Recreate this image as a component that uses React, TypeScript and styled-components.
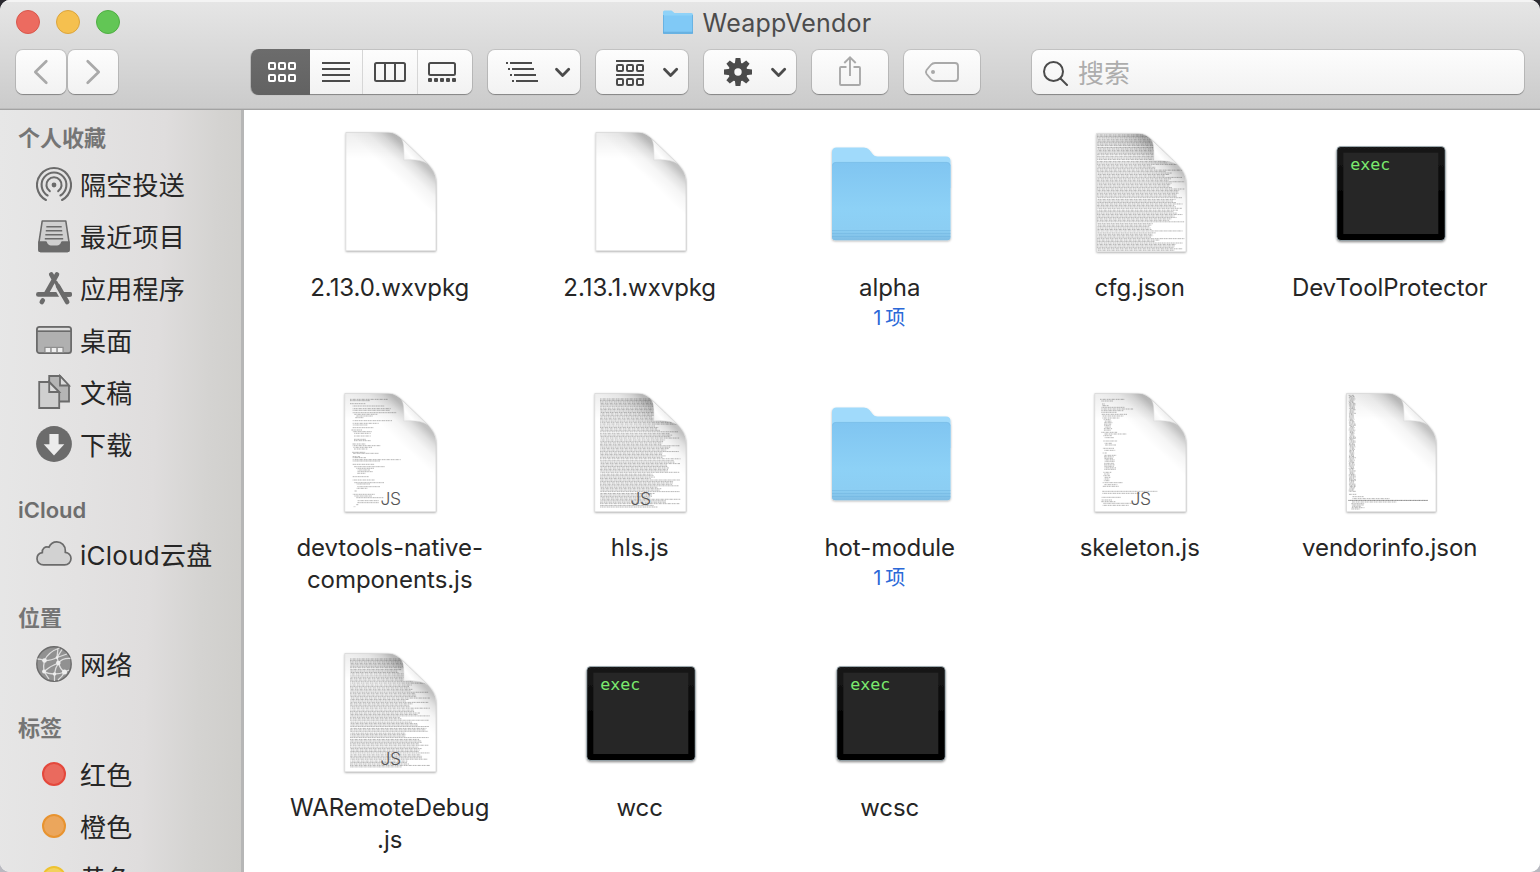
import React from "react";
import styled, { createGlobalStyle } from "styled-components";

const GlobalStyle = createGlobalStyle`
  * { box-sizing: border-box; }
  html, body { margin: 0; padding: 0; }
  body {
    width: 1540px;
    height: 872px;
    overflow: hidden;
    background: linear-gradient(#2b2a30 0, #2b2a30 50%, #b9b9c0 50%, #b9b9c0 100%);
    font-family: Inter, "Noto Sans CJK SC", sans-serif;
  }
`;

/* ---------- window frame ---------- */

const Window = styled.div`
  display: flex;
  flex-direction: column;
  width: 1540px;
  height: 872px;
  border-radius: 10px;
  overflow: hidden;
  background: #fff;
`;

const Header = styled.header`
  flex: none;
  display: flex;
  flex-direction: column;
  height: 110px;
  background: linear-gradient(#e6e6e6, #cbcbcb);
  border-bottom: 1px solid #a3a3a3;
  box-shadow: inset 0 2px 0 #f4f4f4, inset 0 -1px 0 #bdbdbd;
`;

const TitleBar = styled.div`
  display: grid;
  grid-template-columns: 1fr auto 1fr;
  align-items: center;
  height: 50px;
  padding: 0 22px 6px 16px;
`;

const Lights = styled.div`
  display: flex;
  gap: 16px;
`;

const Light = styled.span<{ $fill: string; $edge: string }>`
  width: 24px;
  height: 24px;
  border-radius: 50%;
  background: ${(p) => p.$fill};
  border: 1px solid ${(p) => p.$edge};
`;

const Title = styled.div`
  display: flex;
  align-items: center;
  gap: 10px;
  color: #4c4c4c;
  font-size: 25px;
  line-height: 30px;
  letter-spacing: 0.2px;
`;

const TitleText = styled.span`
  padding-top: 2px;
`;

const Toolbar = styled.div`
  display: flex;
  align-items: flex-start;
  padding: 0 16px;
`;

const ToolButton = styled.button<{ $width: number; $ml?: number }>`
  display: flex;
  flex: none;
  width: ${(p) => p.$width}px;
  height: 44px;
  margin: 0 0 0 ${(p) => p.$ml ?? 0}px;
  padding: 0;
  border: 0;
  border-radius: 7px;
  background: linear-gradient(#fdfdfd, #f2f2f2);
  box-shadow: 0 0 0 1px rgba(0, 0, 0, 0.11), 0 1px 1px rgba(0, 0, 0, 0.28);
`;

const Segments = styled.div`
  display: flex;
  flex: none;
  width: 221px;
  height: 44px;
  margin-left: 133px;
  border-radius: 7px;
  box-shadow: 0 0 0 1px rgba(0, 0, 0, 0.11), 0 1px 1px rgba(0, 0, 0, 0.28);
`;

const Segment = styled.button<{ $width: number; $divided?: boolean; $last?: boolean }>`
  display: flex;
  flex: none;
  width: ${(p) => p.$width}px;
  height: 44px;
  padding: 0;
  border: 0;
  border-radius: ${(p) => (p.$last ? "0 7px 7px 0" : "0")};
  background: linear-gradient(#fdfdfd, #f2f2f2);
  box-shadow: ${(p) => (p.$divided ? "inset 1px 0 0 #d6d6d6" : "none")};
`;

const ActiveSegment = styled(Segment)`
  height: 46px;
  margin-top: -1px;
  padding-top: 1px;
  border-radius: 8px 0 0 8px;
  background: linear-gradient(#6c6c6c, #626262);
`;

const SearchField = styled.div`
  display: flex;
  flex: 1;
  align-items: center;
  gap: 9px;
  height: 44px;
  margin-left: 52px;
  padding-left: 11px;
  border-radius: 7px;
  background: linear-gradient(#fdfdfd, #f2f2f2);
  box-shadow: 0 0 0 1px rgba(0, 0, 0, 0.11), 0 1px 1px rgba(0, 0, 0, 0.28);
  color: #adadad;
  font-size: 26px;
  line-height: 40px;
`;

const SearchText = styled.span`
  padding-top: 3px;
`;

const Main = styled.div`
  display: flex;
  flex: 1;
  min-height: 0;
`;

/* ---------- sidebar ---------- */

const Sidebar = styled.nav`
  flex: none;
  display: flex;
  flex-direction: column;
  gap: 18px;
  width: 244px;
  padding-top: 8px;
  overflow: hidden;
  background: linear-gradient(92deg, #e7e7e7 0%, #e3e2e2 35%, #dfdddd 62%, #d4d3d1 82%, #cecdca 100%);
  border-right: 3px solid #b6b6b6;
`;

const Section = styled.section`
  flex: none;
`;

const SectionTitle = styled.div<{ $latin?: boolean }>`
  height: 40px;
  padding: ${(p) => (p.$latin ? "2px" : "0")} 0 0 18px;
  color: ${(p) => (p.$latin ? "#6e6e6e" : "#757575")};
  font-size: 22px;
  font-weight: 600;
  line-height: 40px;
`;

const SideItem = styled.div`
  display: flex;
  align-items: center;
  gap: 8px;
  height: 52px;
  padding-left: 36px;
  color: #262626;
  font-size: 26px;
  line-height: 48px;
  white-space: nowrap;
`;

const SideLabel = styled.span`
  padding-top: 3px;
  letter-spacing: 0.25px;
`;

const SideIcon = styled.span`
  display: flex;
  flex: none;
  align-items: center;
  justify-content: center;
  width: 36px;
  height: 36px;
`;

const TagDot = styled.span<{ $fill: string; $edge: string }>`
  width: 24px;
  height: 24px;
  border-radius: 50%;
  background: ${(p) => p.$fill};
  border: 2px solid ${(p) => p.$edge};
`;

/* ---------- files ---------- */

const Files = styled.main`
  flex: 1;
  display: grid;
  grid-template-columns: repeat(5, 250px);
  grid-auto-rows: 260px;
  align-content: start;
  padding: 18px 0 0 21px;
  overflow: hidden;
  background: #fff;
`;

const File = styled.figure`
  display: flex;
  flex-direction: column;
  align-items: center;
  margin: 0;
`;

const FileName = styled.figcaption`
  display: flex;
  flex-direction: column;
  align-items: center;
  padding: 16px 0.6px 0 0;
  color: #262626;
  font-size: 24px;
  line-height: 32px;
  letter-spacing: -0.05px;
  white-space: nowrap;
`;

const FileInfo = styled.span`
  display: flex;
  gap: 4px;
  padding-right: 1px;
  color: #2b68d8;
  font-size: 20px;
  line-height: 28px;
`;

/* ---------- toolbar icons ---------- */

const DARK = "#4b4b4b";
const PALE = "#a9a9a9";

const Chevron = () => (
  <path d="M68.5 19.2 74.6 25.4 80.7 19.2" fill="none" stroke={DARK} strokeWidth="2.8" strokeLinecap="round" strokeLinejoin="round" />
);

const BackIcon = () => (
  <svg width="50" height="44" fill="none" stroke={PALE} strokeWidth="2.7" strokeLinecap="round" strokeLinejoin="round">
    <path d="M30.300 11.200 19.300 22 30.300 32.800" />
  </svg>
);

const ForwardIcon = () => (
  <svg width="50" height="44" fill="none" stroke={PALE} strokeWidth="2.7" strokeLinecap="round" strokeLinejoin="round">
    <path d="M19.700 11.200 30.700 22 19.700 32.800" />
  </svg>
);

const GridIcon = () => (
  <svg width="59" height="44" fill="none" stroke="#fff" strokeWidth="2">
    {[13, 25].map((y) => [18, 28, 38].map((x) => <rect key={`${x}-${y}`} x={x} y={y} width="6" height="6" rx="1" />))}
  </svg>
);

const ListIcon = () => (
  <svg width="52" height="44" stroke={DARK} strokeWidth="2">
    <path d="M12 13H40M12 19H40M12 25H40M12 31H40" />
  </svg>
);

const ColumnsIcon = () => (
  <svg width="55" height="44" fill="none" stroke={DARK} strokeWidth="2">
    <rect x="13" y="13" width="30" height="18" rx="1.5" />
    <path d="M23 13V31M33 13V31" />
  </svg>
);

const GalleryIcon = () => (
  <svg width="55" height="44" fill="none" stroke={DARK} strokeWidth="2">
    <rect x="12" y="13" width="26" height="12" rx="1.5" />
    {[11, 17, 23, 29, 35].map((x) => (
      <rect key={x} x={x} y="28" width="4" height="4" rx="1" fill={DARK} stroke="none" />
    ))}
  </svg>
);

const OutlineIcon = () => (
  <svg width="92" height="44" stroke={DARK} strokeWidth="2">
    <path d="M18 13h2m2 0h22M20 19h2m2 0h22M22 25h2m2 0h22M24 31h2m2 0h22" fill="none" />
    <Chevron />
  </svg>
);

const GroupIcon = () => (
  <svg width="92" height="44" fill="none" stroke={DARK} strokeWidth="2">
    <path d="M20 11H48M20 25H48" />
    {[15, 29].map((y) => [21, 31, 41].map((x) => <rect key={`${x}-${y}`} x={x} y={y} width="6" height="6" rx="1" />))}
    <Chevron />
  </svg>
);

const GearIcon = () => (
  <svg width="92" height="44">
    <g transform="translate(34 22)" fill={DARK}>
      {[0, 45, 90, 135].map((a) => (
        <path key={a} transform={`rotate(${a})`} d="M-2.4-14H2.4L3.2-8V8L2.4 14H-2.4L-3.2 8V-8Z" />
      ))}
      <circle r="9.6" />
      <circle r="3.7" fill="#f8f8f8" />
    </g>
    <Chevron />
  </svg>
);

const ShareIcon = () => (
  <svg width="76" height="44" fill="none" stroke={PALE} strokeWidth="1.9">
    <path d="M34.5 17H29Q28 17 28 18V34Q28 35 29 35H47Q48 35 48 34V18Q48 17 47 17H41.5" />
    <path d="M38 26V7.5M32.3 13 38 7.3 43.7 13" />
  </svg>
);

const TagIcon = () => (
  <svg width="76" height="44" fill="none" stroke={PALE} strokeWidth="1.9">
    <path d="M31 13H51Q54 13 54 16V28Q54 31 51 31H31Q28.5 31 26.8 29L22.6 24Q21.2 22 22.6 20L26.8 15Q28.5 13 31 13Z" />
    <circle cx="29" cy="22" r="2" fill={PALE} stroke="none" />
  </svg>
);

const SearchIcon = () => (
  <svg width="26" height="28" fill="none" stroke={DARK} strokeWidth="2" strokeLinecap="round">
    <circle cx="10.500" cy="13.500" r="9.500" />
    <path d="M17.500 20.500 24 27" />
  </svg>
);

const TitleFolder = () => (
  <svg width="30" height="25">
    <path d="M0 2Q0 .5 1.5 .5H8.5L11.5 3H28.5Q30 3 30 4.5V22H0Z" fill="#8fd2f8" />
    <rect x="0" y="5.5" width="30" height="18.5" rx="1" fill="#80c9f6" />
    <path d="M0 22.3H30" stroke="#62acdc" strokeWidth="1" />
    <path d="M.5 5V23.5H29.5V5" fill="none" stroke="#5faadb" strokeOpacity=".7" />
  </svg>
);

/* ---------- sidebar icons ---------- */

const G = "#6b6b6b";

const AirDropIcon = () => (
  <svg width="36" height="36" fill="none" stroke={G} strokeWidth="2.1" strokeLinecap="round">
    <path d="M9.9 34A17 17 0 1 1 26.1 34" />
    <path d="M11.6 29.5A12.4 12.4 0 1 1 24.4 29.5" />
    <path d="M13.8 25.2A7.6 7.6 0 1 1 22.2 25.2" />
    <circle cx="18" cy="19" r="2.4" fill={G} stroke="none" />
  </svg>
);

const RecentsIcon = () => (
  <svg width="36" height="36" stroke={G} strokeWidth="1.6" strokeLinejoin="round">
    <path d="M6.2 3H29.8L33 24V32Q33 33.5 31.5 33.5H4.5Q3 33.5 3 32V24Z" fill="#cfcfcf" />
    <path d="M3 24H10Q11.5 28.3 15 28.3H21Q24.5 28.3 26 24H33V32Q33 33.5 31.5 33.5H4.5Q3 33.5 3 32Z" fill={G} />
    <path d="M10.3 8.7H25.7M9.8 12.7H26.2M9.3 16.7H26.7M8.8 20.7H27.2" />
  </svg>
);

const AppsIcon = () => (
  <svg width="36" height="36" fill="none" stroke={G} strokeLinecap="round">
    <path d="M2.3 24.4H33.7" strokeWidth="4.6" />
    <path d="M21 4.4 10.5 23" strokeWidth="4.6" />
    <path d="M6.8 30.4 5.8 32" strokeWidth="4.6" />
    <path d="M20 14.5 30.5 32.8" strokeWidth="7" stroke="#e2e2e2" strokeLinecap="butt" />
    <path d="M15.2 4.4 17 7.5M22 16.2 31.2 32" strokeWidth="4.6" />
    <path d="M19.8 12.2 28 26.5" strokeWidth="3.4" />
    <path d="M27.5 24.4H33.7" strokeWidth="4.6" />
  </svg>
);

const DesktopIcon = () => (
  <svg width="36" height="36">
    <rect x=".9" y="4.9" width="34.2" height="26.2" rx="2.6" fill="#b0b0b0" stroke={G} strokeWidth="1.8" />
    <path d="M2 8.2V7.4Q2 6 3.4 6H32.6Q34 6 34 7.4V8.2Z" fill="#dedede" />
    <path d="M1 9.2H35" stroke={G} strokeWidth="1.5" />
    <rect x="8.3" y="24.8" width="19.4" height="6" fill="#8f8f8f" />
    <path d="M9.6 26H14.2V30H9.6ZM15.7 26H20.3V30H15.7ZM21.8 26H26.4V30H21.8Z" fill="#efefef" />
  </svg>
);

const DocumentsIcon = () => (
  <svg width="36" height="36" stroke={G} strokeWidth="1.8">
    <path d="M13.2 2H24L33 11.5V27.5H13.2Z" fill="#b5b5b5" />
    <path d="M24 2V11.5H33Z" fill="#dcdcdc" />
    <path d="M3.2 8H13.2L23.2 18V34H3.2Z" fill="#cfcfcf" />
    <path d="M13.2 8V18H23.2Z" fill="#dcdcdc" />
  </svg>
);

const DownloadIcon = () => (
  <svg width="36" height="36">
    <circle cx="18" cy="18" r="17.9" fill={G} />
    <path d="M13.4 8H22.6V18.3H28.3L18 29.4 7.7 18.3H13.4Z" fill="#ececec" />
  </svg>
);

const CloudIcon = () => (
  <svg width="36" height="36">
    <path
      d="M7.6 28.9C3.8 28.9 1 26.2 1 22.7 1 19.6 3.2 17.1 6.3 16.6 5.9 12.6 9.2 9.8 13 11.2 14.4 7.900 17.400 5.900 20.800 5.900 25.700 5.900 29.300 9.700 29.300 14.600V16.300C32.600 16.700 35 19.300 35 22.600 35 26.100 32.200 28.900 28.600 28.900Z"
      fill="#d2d2d2"
      stroke={G}
      strokeWidth="1.7"
    />
  </svg>
);

const NetworkIcon = () => (
  <svg width="36" height="36">
    <circle cx="18" cy="18" r="17.2" fill="#919191" stroke={G} strokeWidth="1.4" />
    <g fill="none" stroke="#dedede" strokeWidth="1.3">
      <path d="M1.500 13Q5 13 8.500 14.500Q12 6 23.500 2M8.500 14.500Q16 14.500 21 11.500L26 3.500M21 11.500 31 8M21 11.500 22.500 17Q26 12 34.500 12.500M22.500 17Q24 23 28.500 26L33 24M22.500 17Q14 20 8 25.500M8.500 14.500Q7 20 8 25.500L13 33M8 25.500Q12 28 18.500 28Q24 28 28.500 26Q27 30 22 34M18.500 28V35M22.500 17Q19 22 18.500 28M21 11.500 22 2" />
    </g>
    <g fill="#eeeeee">
      <circle cx="8.500" cy="14.500" r="2.300" />
      <circle cx="22.300" cy="17" r="2.300" />
      <circle cx="8" cy="25.500" r="1.900" />
      <circle cx="18.500" cy="28" r="1.700" />
      <circle cx="28.500" cy="26" r="2.500" />
      <circle cx="21" cy="11.500" r="1.300" />
    </g>
  </svg>
);

/* ---------- file icons ---------- */

const FolderIcon = () => (
  <svg width="128" height="128">
    <defs>
      <linearGradient id="folderFront" x1="0" y1="0" x2="0" y2="1">
        <stop offset="0" stopColor="#80c5f1" />
        <stop offset=".6" stopColor="#8dd1f6" />
        <stop offset=".86" stopColor="#8ccef3" />
        <stop offset="1" stopColor="#7ebde4" />
      </linearGradient>
      <filter id="folderShadow" x="-10%" y="-10%" width="120%" height="120%">
        <feDropShadow dx="0" dy="1" stdDeviation=".9" floodOpacity=".3" />
      </filter>
    </defs>
    <g filter="url(#folderShadow)">
      <path d="M6 24Q6 19.500 10.500 19.500H38Q41.500 19.500 43.500 22L47 26.500Q48.500 28.500 51.500 28.500H120Q124.500 28.500 124.500 33V60H6Z" fill="#a0dafb" />
      <path d="M6 38Q6 34 10 34H120.500Q124.500 34 124.500 38V109.500Q124.500 112.300 121.500 112.300H9Q6 112.300 6 109.500Z" fill="url(#folderFront)" />
    </g>
    <path d="M6.500 37.500Q7 34.400 10 34.400H120.500Q123.500 34.400 124 37.500" fill="none" stroke="#7abce6" strokeWidth=".6" />
    <path d="M6 102.500H124.500M6 105.500H124.500M6 108.500H124.500" stroke="#69aedb" strokeWidth=".8" strokeOpacity=".5" />
  </svg>
);

const ExecIcon = () => (
  <svg width="128" height="128">
    <defs>
      <linearGradient id="execFrame" x1="0" y1="0" x2="0" y2="1">
        <stop offset="0" stopColor="#1a1a1a" />
        <stop offset=".5" stopColor="#050505" />
        <stop offset="1" stopColor="#000" />
      </linearGradient>
      <filter id="execShadow" x="-10%" y="-10%" width="120%" height="125%">
        <feDropShadow dx="0" dy="1.300" stdDeviation="1.200" floodOpacity=".45" />
      </filter>
    </defs>
    <rect x="10.800" y="18.500" width="108.400" height="94" rx="4" fill="url(#execFrame)" stroke="#a9bcc4" strokeWidth=".7" filter="url(#execShadow)" />
    <rect x="17.300" y="24.700" width="95" height="81.300" fill="#262626" />
    <text x="24.200" y="42.300" fill="#7bea6f" fontFamily="'DejaVu Sans Mono', monospace" fontSize="16.700">
      exec
    </text>
  </svg>
);

type Stroke = [y: number, x1: number, x2: number];

const seeded = (seed: number) => () => {
  seed = (seed * 16807) % 2147483647;
  return seed / 2147483647;
};

/* Minified source: tightly packed rows, grouped into blocks of similar width. */
const denseStrokes = (seed: number, left: number, right: number, top: number, bottom: number): Stroke[] => {
  const rand = seeded(seed);
  const rows: Stroke[] = [];
  let y = top;
  while (y < bottom) {
    const size = 2 + Math.floor(rand() * 4);
    const reach = 0.62 + rand() * 0.32;
    for (let i = 0; i < size && y < bottom; i++) {
      rows.push([y, left, left + (right - left) * reach * (0.94 + rand() * 0.1)]);
      y += 1.45;
    }
    if (y < bottom) {
      rows.push([y, left, right - rand() * 3]);
      y += rand() > 0.5 ? 1.9 : 1.45;
    }
  }
  return rows;
};

const scaled = (rows: Stroke[], dx: number): Stroke[] => rows.map(([y, a, b]) => [y / 3 - 8, a / 3 - dx, b / 3 - dx]);

const run = (from: number, to: number, step: number, x1: number, x2: number, seed: number): Stroke[] => {
  const rand = seeded(seed);
  const rows: Stroke[] = [];
  for (let y = from; y <= to; y += step) rows.push([y, x1 + rand() * 3, x2 - rand() * (x2 - x1) * 0.35]);
  return rows;
};

const devtoolsCode = scaled(
  [
    [58, 210, 324], [62, 210, 270], [71, 210, 256], [78, 218, 314], [86, 218, 332], [91, 218, 330], [98, 218, 350],
    [103, 222, 292], [108, 228, 278], [113, 224, 250], [122, 218, 336], [130, 218, 296], [135, 218, 262], [143, 218, 280],
    [150, 214, 246], [155, 218, 276], [160, 222, 272], [168, 222, 272], [178, 222, 258], [182, 222, 272], [192, 216, 256],
    [197, 218, 302], [202, 220, 276], [207, 222, 262], [217, 216, 256], [220, 218, 296], [230, 216, 240], [233, 218, 258],
    [239, 218, 362], [243, 218, 300], [253, 218, 284], [260, 222, 314], [265, 228, 282], [270, 232, 270], [275, 232, 278],
    [280, 232, 256], [290, 218, 266], [300, 218, 284], [308, 222, 312], [312, 230, 270], [320, 232, 300], [325, 230, 262],
    [333, 222, 230], [343, 218, 284], [348, 222, 276], [353, 228, 310], [362, 232, 296], [368, 232, 296], [374, 228, 236],
    [380, 220, 226],
  ],
  46
);

const skeletonCode = scaled(
  [
    [58, 120, 194], [63, 124, 160], [72, 126, 134], [77, 126, 146], [82, 124, 194], [87, 124, 220], [92, 124, 190],
    [97, 124, 170], [103, 124, 202], [108, 126, 190], [114, 126, 178],
    ...run(119, 152, 4.5, 131, 158, 5),
    [157, 124, 172], [162, 132, 200], [167, 130, 156], [173, 134, 162], [183, 130, 172], [190, 134, 156], [195, 134, 168],
    [205, 128, 162], [211, 132, 166], [219, 128, 140],
    ...run(226, 244, 4.5, 132, 170, 8),
    ...run(250, 270, 4.5, 132, 170, 12),
    ...run(277, 303, 5, 130, 156, 17),
    [308, 128, 188], [314, 132, 172], [319, 128, 176], [334, 126, 292], [340, 126, 240], [352, 124, 182], [360, 124, 156],
    [365, 124, 166], [370, 130, 216], [376, 128, 206],
  ],
  16
);

const vendorCode = scaled(
  [
    ...run(46, 336, 3.6, 866, 888, 21),
    [343, 866, 890],
    [350, 876, 912],
    [356, 876, 990],
    [361, 864, 1104],
    [361.5, 864, 1104],
    [366, 876, 1010],
    ...run(371, 390, 4, 874, 914, 31),
  ],
  266
);

const cfgCode = denseStrokes(77, 21, 108.500, 7, 123.500);
const hlsCode = denseStrokes(1234, 24, 104.500, 11, 119.500);
const debugCode = denseStrokes(4321, 24, 104.500, 11, 119.500);

type DocProps = { id: string; left?: number; top?: number; code?: Stroke[]; badge?: string };

const DocIcon = ({ id, left = 18.700, top = 5.500, code = [], badge }: DocProps) => {
  const t = top;
  const bottom = t + 118.300;
  const outline = `M${left} ${t}H62C69 ${t} 73 ${t + 3.500} 76 ${t + 6.500}L101 ${t + 30.500}C107 ${t + 36.500} 110 ${t + 42} 110 ${t + 50}V${bottom}H${left}Z`;
  const flap = `M75.500 ${t + 6.200}C78 ${t + 10} 78 ${t + 17} 77.800 ${t + 27.500}C88 ${t + 26.800} 96 ${t + 27.500} 102 ${t + 31.500}Z`;
  return (
    <svg width="128" height="128">
      <defs>
        <linearGradient id={`${id}-shade`} gradientUnits="userSpaceOnUse" x1="86" y1={t + 21} x2="66" y2={t + 42}>
          <stop offset="0" stopColor="#000" stopOpacity=".24" />
          <stop offset=".25" stopColor="#000" stopOpacity=".12" />
          <stop offset=".55" stopColor="#000" stopOpacity=".04" />
          <stop offset="1" stopColor="#000" stopOpacity="0" />
        </linearGradient>
        <linearGradient id={`${id}-top`} gradientUnits="userSpaceOnUse" x1="0" y1={t} x2="0" y2={t + 26}>
          <stop offset="0" stopColor="#000" stopOpacity=".07" />
          <stop offset="1" stopColor="#000" stopOpacity="0" />
        </linearGradient>
        <linearGradient id={`${id}-flap`} gradientUnits="userSpaceOnUse" x1="77" y1={t + 28} x2="90" y2={t + 17}>
          <stop offset="0" stopColor="#f1f1f1" />
          <stop offset=".5" stopColor="#fff" />
          <stop offset="1" stopColor="#ebebeb" />
        </linearGradient>
        <filter id={`${id}-drop`} x="-10%" y="-10%" width="120%" height="120%">
          <feDropShadow dx="0" dy=".8" stdDeviation=".8" floodOpacity=".38" />
        </filter>
        <clipPath id={`${id}-clip`}>
          <path d={outline} />
        </clipPath>
      </defs>
      <path d={outline} fill="#fff" filter={`url(#${id}-drop)`} />
      <g clipPath={`url(#${id}-clip)`}>
        {code.map(([y, a, b], i) => (
          <path
            key={i}
            d={`M${a.toFixed(2)} ${y.toFixed(2)}H${b.toFixed(2)}`}
            stroke="#3a3a3a"
            strokeOpacity=".46"
            strokeWidth=".8"
            strokeDasharray="1.300 .4 .8 .5 2.100 .3 .9 .6 1.700 .4"
            strokeDashoffset={(i * 3.700) % 9}
          />
        ))}
        <path d={outline} fill={`url(#${id}-top)`} />
        <path d={outline} fill={`url(#${id}-shade)`} />
      </g>
      <path d={outline} fill="none" stroke="#cccccc" strokeWidth=".6" />
      <path d={flap} fill={`url(#${id}-flap)`} stroke="#d6d6d6" strokeWidth=".5" />
      {badge && (
        <text x="64.500" y="117" textAnchor="middle" fill="#565656" fontFamily="Inter, sans-serif" fontWeight="300" fontSize="17.500" letterSpacing="-.6">
          {badge}
        </text>
      )}
    </svg>
  );
};

/* ---------- data ---------- */

const sections = [
  {
    title: "个人收藏",
    items: [
      { label: "隔空投送", icon: <AirDropIcon /> },
      { label: "最近项目", icon: <RecentsIcon /> },
      { label: "应用程序", icon: <AppsIcon /> },
      { label: "桌面", icon: <DesktopIcon /> },
      { label: "文稿", icon: <DocumentsIcon /> },
      { label: "下载", icon: <DownloadIcon /> },
    ],
  },
  { title: "iCloud", latin: true, items: [{ label: "iCloud云盘", icon: <CloudIcon /> }] },
  { title: "位置", items: [{ label: "网络", icon: <NetworkIcon /> }] },
  {
    title: "标签",
    items: [
      { label: "红色", icon: <TagDot $fill="#ea6a5e" $edge="#e4483c" /> },
      { label: "橙色", icon: <TagDot $fill="#eba65c" $edge="#e8932f" /> },
      { label: "黄色", icon: <TagDot $fill="#f2d15c" $edge="#eec22f" /> },
    ],
  },
];

type Entry = { lines: string[]; count?: number; icon: React.ReactNode };

const files: Entry[] = [
  { lines: ["2.13.0.wxvpkg"], icon: <DocIcon id="p0" left={19.800} top={4.500} /> },
  { lines: ["2.13.1.wxvpkg"], icon: <DocIcon id="p1" left={19.800} top={4.500} /> },
  { lines: ["alpha"], count: 1, icon: <FolderIcon /> },
  { lines: ["cfg.json"], icon: <DocIcon id="cfg" left={20.500} code={cfgCode} /> },
  { lines: ["DevToolProtector"], icon: <ExecIcon /> },
  { lines: ["devtools-native-", "components.js"], icon: <DocIcon id="dev" code={devtoolsCode} badge="JS" /> },
  { lines: ["hls.js"], icon: <DocIcon id="hls" code={hlsCode} badge="JS" /> },
  { lines: ["hot-module"], count: 1, icon: <FolderIcon /> },
  { lines: ["skeleton.js"], icon: <DocIcon id="skel" code={skeletonCode} badge="JS" /> },
  { lines: ["vendorinfo.json"], icon: <DocIcon id="vend" left={20.500} code={vendorCode} /> },
  { lines: ["WARemoteDebug", ".js"], icon: <DocIcon id="wa" code={debugCode} badge="JS" /> },
  { lines: ["wcc"], icon: <ExecIcon /> },
  { lines: ["wcsc"], icon: <ExecIcon /> },
];

export default function App() {
  return (
    <>
      <GlobalStyle />
      <Window>
        <Header>
          <TitleBar>
            <Lights>
              <Light $fill="#ec6b60" $edge="#d8574c" />
              <Light $fill="#f5c04f" $edge="#dba43c" />
              <Light $fill="#62c655" $edge="#4fae43" />
            </Lights>
            <Title>
              <TitleFolder />
              <TitleText>WeappVendor</TitleText>
            </Title>
          </TitleBar>
          <Toolbar>
            <ToolButton $width={50}><BackIcon /></ToolButton>
            <ToolButton $width={50} $ml={2}><ForwardIcon /></ToolButton>
            <Segments>
              <ActiveSegment $width={59}><GridIcon /></ActiveSegment>
              <Segment $width={52}><ListIcon /></Segment>
              <Segment $width={55} $divided><ColumnsIcon /></Segment>
              <Segment $width={55} $divided $last><GalleryIcon /></Segment>
            </Segments>
            <ToolButton $width={92} $ml={16}><OutlineIcon /></ToolButton>
            <ToolButton $width={92} $ml={16}><GroupIcon /></ToolButton>
            <ToolButton $width={92} $ml={16}><GearIcon /></ToolButton>
            <ToolButton $width={76} $ml={16}><ShareIcon /></ToolButton>
            <ToolButton $width={76} $ml={16}><TagIcon /></ToolButton>
            <SearchField>
              <SearchIcon />
              <SearchText>搜索</SearchText>
            </SearchField>
          </Toolbar>
        </Header>
        <Main>
          <Sidebar>
            {sections.map((s) => (
              <Section key={s.title}>
                <SectionTitle $latin={s.latin}>{s.title}</SectionTitle>
                {s.items.map((item) => (
                  <SideItem key={item.label}>
                    <SideIcon>{item.icon}</SideIcon>
                    <SideLabel>{item.label}</SideLabel>
                  </SideItem>
                ))}
              </Section>
            ))}
          </Sidebar>
          <Files>
            {files.map((f) => (
              <File key={f.lines[0]}>
                {f.icon}
                <FileName>
                  {f.lines.map((l) => (
                    <span key={l}>{l}</span>
                  ))}
                  {f.count && (
                    <FileInfo>
                      <span>{f.count}</span>
                      <span>项</span>
                    </FileInfo>
                  )}
                </FileName>
              </File>
            ))}
          </Files>
        </Main>
      </Window>
    </>
  );
}
